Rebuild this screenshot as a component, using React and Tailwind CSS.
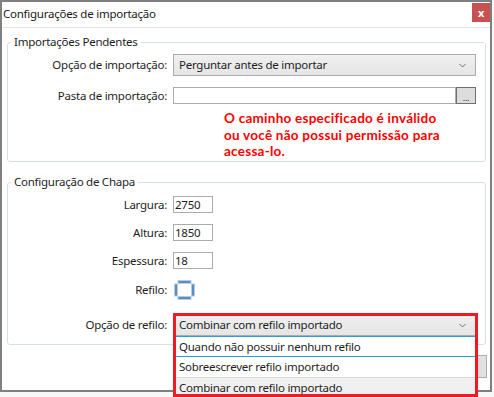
const fonte = { fontFamily: '"Noto Sans", "Open Sans", sans-serif' };
const fonteErro = { fontFamily: 'Lato, "Noto Sans", sans-serif' };

const Chevron = () => (
  <svg width="7" height="5" viewBox="0 0 7 5" className="shrink-0">
    <path d="M0.5 1 L3.5 4 L6.5 1" fill="none" stroke="#707070" strokeWidth="1" />
  </svg>
);

const Combo = ({ valor }) => (
  <div className="h-[22px] w-[303px] flex items-center justify-between pl-[5px] pr-[9px] border border-[#acacac] bg-gradient-to-b from-[#f0f0f0] to-[#e5e5e5] text-[#1e1e1e]">
    <span>{valor}</span>
    <Chevron />
  </div>
);

const Linha = ({ rotulo, children, className = "" }) => (
  <div className={`flex items-center ${className}`}>
    <div className="w-[159px] text-right text-[#1e1e1e]">{rotulo}</div>
    <div className="ml-[6px]">{children}</div>
  </div>
);

const CampoNum = ({ valor }) => (
  <div className="h-[17px] w-[40px] border border-[#ababab] bg-white flex items-center pl-[1px] leading-none text-[#1e1e1e]">
    {valor}
  </div>
);

const Refilo = () => (
  <svg width="21" height="20" viewBox="0 0 21 20">
    <rect x="4" y="0.5" width="13" height="3" fill="#5b8cc4" stroke="#b7cbe3" strokeWidth="1" />
    <rect x="4" y="16.5" width="13" height="3" fill="#5b8cc4" stroke="#b7cbe3" strokeWidth="1" />
    <rect x="0.5" y="4" width="3" height="12" fill="#5b8cc4" stroke="#b7cbe3" strokeWidth="1" />
    <rect x="17.5" y="4" width="3" height="12" fill="#5b8cc4" stroke="#b7cbe3" strokeWidth="1" />
  </svg>
);

export default function App() {
  const opcoes = ["Quando não possuir nenhum refilo", "Sobreescrever refilo importado", "Combinar com refilo importado"];

  return (
    <div className="w-[494px] h-[397px] bg-[#f7f7f7] text-[11.5px] leading-[16px] tracking-[-0.25px]" style={fonte}>
      <div className="w-[492px] h-[392px] border-2 border-[#7f7f7f] bg-white flex flex-col">
        {/* barra de título */}
        <div className="h-[26px] shrink-0 flex items-start justify-between border-b border-[#e2e2e2]">
          <span className="pl-[1px] pt-[4px] text-[#1a1a1a]">Configurações de importação</span>
          <button className="mt-[1px] w-[18px] h-[19px] bg-[#c75050] text-white text-[11px] font-bold flex items-center justify-center leading-none">
            x
          </button>
        </div>

        {/* Importações Pendentes */}
        <fieldset className="ml-[5px] mt-[6px] w-[479px] h-[128px] shrink-0 border border-[#d5dfe5] rounded-[3px]">
          <legend className="ml-[3px] px-[3px] text-[#1e1e1e]">Importações Pendentes</legend>
          <Linha rotulo="Opção de importação:" className="mt-[4px]">
            <Combo valor="Perguntar antes de importar" />
          </Linha>
          <Linha rotulo="Pasta de importação:" className="mt-[11px]">
            <div className="flex h-[17px] w-[303px]">
              <div className="flex-1 border border-[#ababab] bg-white" />
              <div className="w-[20px] border border-[#707070] bg-[#dddddd] flex items-end justify-center text-[9px] leading-[10px] text-[#333]">...</div>
            </div>
          </Linha>
          <div className="ml-[216px] mt-[6px] text-[13.5px] leading-[16.5px] tracking-[0.25px] font-bold text-[#ff0000]" style={fonteErro}>
            O caminho especificado é inválido<br />
            ou você não possui permissão para<br />
            acessa-lo.
          </div>
        </fieldset>

        {/* Configuração de Chapa */}
        <fieldset className="ml-[5px] mt-[12px] w-[479px] h-[171px] shrink-0 border border-[#d5dfe5] rounded-[3px]">
          <legend className="ml-[3px] px-[3px] text-[#1e1e1e]">Configuração de Chapa</legend>
          <Linha rotulo="Largura:" className="mt-[6px]"><CampoNum valor="2750" /></Linha>
          <Linha rotulo="Altura:" className="mt-[11px]"><CampoNum valor="1850" /></Linha>
          <Linha rotulo="Espessura:" className="mt-[11px]"><CampoNum valor="18" /></Linha>
          <Linha rotulo="Refilo:" className="mt-[11px]">
            <div className="pl-[1px]"><Refilo /></div>
          </Linha>
          <Linha rotulo="Opção de refilo:" className="mt-[14px]">
            <div className="relative">
              <Combo valor="Combinar com refilo importado" />
              {/* lista aberta */}
              <div className="absolute left-0 top-[22px] w-[303px] bg-white z-10 shadow-[2px_2px_2px_rgba(0,0,0,0.15)] text-[#1e1e1e]">
                <div className="h-[21px] flex items-center pl-[6px] border-y border-[#26a0da] bg-white">{opcoes[0]}</div>
                <div className="h-[20px] flex items-center pl-[6px] bg-white">{opcoes[1]}</div>
                <div className="h-[20px] flex items-center pl-[6px] bg-[#f0f0f0] border-t border-[#dadada]">{opcoes[2]}</div>
              </div>
              {/* destaque vermelho */}
              <div className="absolute left-0 top-[-1px] w-[305px] h-[84px] border-[3px] border-[#ed1c24] z-20 pointer-events-none" />
            </div>
          </Linha>
        </fieldset>

        <div className="flex justify-end mr-[3px] mt-[10px]">
          <button className="w-[75px] h-[23px] bg-[#e1e1e1] border border-[#adadad]">Salvar</button>
        </div>
      </div>
    </div>
  );
}
